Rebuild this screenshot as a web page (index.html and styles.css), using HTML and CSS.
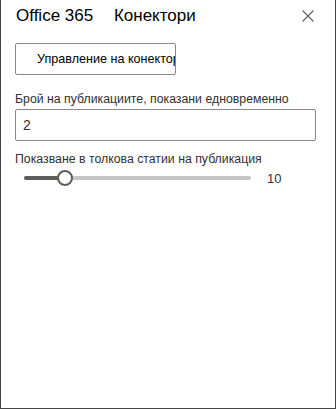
FILE: index.html
```html
<!DOCTYPE html>
<html lang="bg">
<head>
    <meta charset="UTF-8">
    <meta name="viewport" content="width=device-width, initial-scale=1.0">
    <title>Office 365 Конектори</title>
    <link rel="stylesheet" href="styles.css">
</head>
<body>
    <div class="panel">
        <div class="header">
            <div class="title">
                <span>Office 365</span>
                <span class="title-second">Конектори</span>
            </div>
            <button type="button" class="close-button" aria-label="Затвори">
                <svg width="12" height="12" viewBox="0 0 12 12">
                    <path d="M0.5 0.5 L11.5 11.5 M11.5 0.5 L0.5 11.5" stroke="#605e5c" stroke-width="1.1" fill="none"/>
                </svg>
            </button>
        </div>
        <div class="content">
            <button type="button" class="manage-button">Управление на конектор</button>
            <label class="field-label" for="post-count">Брой на публикациите, показани едновременно</label>
            <input type="text" class="text-field" id="post-count" value="2">
            <div class="field-label">Показване в толкова статии на публикация</div>
            <div class="slider-row">
                <div class="slider-track">
                    <div class="slider-fill"></div>
                    <div class="slider-thumb"></div>
                </div>
                <span class="slider-value">10</span>
            </div>
        </div>
    </div>
</body>
</html>
```

FILE: styles.css
```css
body {
    margin: 0;
    font-family: "Liberation Sans", Arial, sans-serif;
    color: #323130;
    background-color: white;
}
.panel {
    width: 336px;
    height: 409px;
    box-sizing: border-box;
    border: 1px solid #444;
    border-top: none;
}
.header {
    display: flex;
    align-items: center;
    justify-content: space-between;
    height: 31px;
    padding-left: 15px;
    padding-right: 21px;
}
.title {
    font-size: 17px;
    color: #000;
    white-space: nowrap;
}
.title-second {
    margin-left: 16px;
}
.close-button {
    background: none;
    border: none;
    padding: 0;
    width: 12px;
    height: 12px;
    display: flex;
    cursor: pointer;
}
.content {
    padding: 12px 14px 0;
}
.manage-button {
    display: block;
    width: 161px;
    height: 32px;
    box-sizing: border-box;
    border: 1px solid #8a8886;
    border-radius: 2px;
    background-color: white;
    padding: 0 0 0 21px;
    text-align: left;
    font-family: inherit;
    font-size: 12.6px;
    color: #000;
    white-space: nowrap;
    overflow: hidden;
}
.field-label {
    display: block;
    font-size: 12.3px;
    line-height: 20px;
    margin-top: 14px;
    white-space: nowrap;
}
.text-field {
    display: block;
    width: 301px;
    height: 32px;
    box-sizing: border-box;
    border: 1px solid #8a8886;
    border-radius: 2px;
    padding: 0 7px;
    font-family: inherit;
    font-size: 14px;
    color: #323130;
    margin-bottom: 8px;
}
.text-field + .field-label {
    margin-top: 0;
}
.slider-row {
    display: flex;
    align-items: center;
    height: 18px;
    padding-left: 9px;
}
.slider-track {
    position: relative;
    width: 227px;
    height: 4px;
    border-radius: 2px;
    background-color: #c8c6c4;
}
.slider-fill {
    width: 41px;
    height: 4px;
    border-radius: 2px;
    background-color: #605e5c;
}
.slider-thumb {
    position: absolute;
    left: 33px;
    top: -6px;
    width: 12px;
    height: 12px;
    border: 2px solid #605e5c;
    border-radius: 50%;
    background-color: white;
}
.slider-value {
    margin-left: 16px;
    font-size: 13px;
    color: #323130;
}
```
